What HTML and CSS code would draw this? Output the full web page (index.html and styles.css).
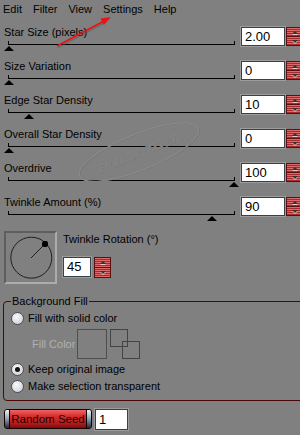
FILE: index.html
```html
<!DOCTYPE html>
<html lang="en">
<head>
    <meta charset="UTF-8">
    <meta name="viewport" content="width=device-width, initial-scale=1.0">
    <title>Star Effects</title>
    <link rel="stylesheet" href="styles.css">
</head>
<body>
    <div class="menubar">
        <span>Edit</span><span>Filter</span><span>View</span><span>Settings</span><span>Help</span>
    </div>

    <div class="row">
        <div class="field">
            <div class="label">Star Size (pixels)</div>
            <div class="track"><span class="thumb" style="left: 0%"></span></div>
        </div>
        <div class="value">
            <div class="box">2.00</div>
            <div class="spin"><span class="up"></span><span class="down"></span></div>
        </div>
    </div>

    <div class="row">
        <div class="field">
            <div class="label">Size Variation</div>
            <div class="track"><span class="thumb" style="left: 0%"></span></div>
        </div>
        <div class="value">
            <div class="box">0</div>
            <div class="spin"><span class="up"></span><span class="down"></span></div>
        </div>
    </div>

    <div class="row">
        <div class="field">
            <div class="label">Edge Star Density</div>
            <div class="track"><span class="thumb" style="left: 9.1%"></span></div>
        </div>
        <div class="value">
            <div class="box">10</div>
            <div class="spin"><span class="up"></span><span class="down"></span></div>
        </div>
    </div>

    <div class="row">
        <div class="field">
            <div class="label">Overall Star Density</div>
            <div class="track"><span class="thumb" style="left: 0%"></span></div>
        </div>
        <div class="value">
            <div class="box">0</div>
            <div class="spin"><span class="up"></span><span class="down"></span></div>
        </div>
    </div>

    <div class="row">
        <div class="field">
            <div class="label">Overdrive</div>
            <div class="track"><span class="thumb" style="left: 100%"></span></div>
        </div>
        <div class="value">
            <div class="box">100</div>
            <div class="spin"><span class="up"></span><span class="down"></span></div>
        </div>
    </div>

    <div class="row">
        <div class="field">
            <div class="label">Twinkle Amount (%)</div>
            <div class="track"><span class="thumb" style="left: 90%"></span></div>
        </div>
        <div class="value">
            <div class="box">90</div>
            <div class="spin"><span class="up"></span><span class="down"></span></div>
        </div>
    </div>

    <!-- rotation dial -->
    <div class="rotation">
        <div class="dial">
            <svg width="49" height="49" viewBox="0 0 49 49">
                <circle cx="25.3" cy="24.7" r="20.5" fill="none" stroke="#1e1e1e" stroke-width="1"/>
                <line x1="25" y1="25" x2="39" y2="11" stroke="#1e1e1e" stroke-width="1"/>
                <rect x="36" y="8" width="6" height="6" rx="2" fill="#000"/>
            </svg>
        </div>
        <div class="rot-side">
            <div class="label">Twinkle Rotation (°)</div>
            <div class="value">
                <div class="box short">45</div>
                <div class="spin tall"><span class="up"></span><span class="down"></span></div>
            </div>
        </div>
    </div>

    <fieldset class="group">
        <legend>Background Fill</legend>
        <div class="opt"><span class="radio"></span>Fill with solid color</div>
        <div class="fill">
            <span class="fill-label">Fill Color</span>
            <span class="swatch"></span>
            <span class="squares"><span class="sq sq-a"></span><span class="sq sq-b"></span></span>
        </div>
        <div class="opt gap"><span class="radio on"></span>Keep original image</div>
        <div class="opt"><span class="radio"></span>Make selection transparent</div>
    </fieldset>

    <div class="seed">
        <div class="seed-btn"><span class="cap"></span><span class="seed-label">Random Seed</span><span class="cap"></span></div>
        <div class="box seed-box">1</div>
    </div>

    <!-- watermark + annotation arrow -->
    <svg class="overlay" width="300" height="435" viewBox="0 0 300 435">
        <g transform="rotate(-22 139 152)" fill="none">
            <ellipse cx="139.6" cy="152.6" rx="64" ry="18" stroke="#747474" stroke-width="1"/>
            <ellipse cx="139" cy="152" rx="64" ry="18" stroke="#8c8c8c" stroke-width="1"/>
            <text x="140.6" y="157.6" text-anchor="middle" font-size="11" font-style="italic" class="wm" fill="#747474" textLength="90">ETOILESAUSECRETS</text>
            <text x="140" y="157" text-anchor="middle" font-size="11" font-style="italic" class="wm" fill="#8c8c8c" textLength="90">ETOILESAUSECRETS</text>
            <text x="140.3" y="157.3" text-anchor="middle" font-size="11" font-style="italic" class="wm" fill="#808080" textLength="90">ETOILESAUSECRETS</text>
        </g>
        <line x1="58" y1="47.5" x2="104" y2="23" stroke="#555" stroke-opacity="0.5" stroke-width="1.5"/>
        <line x1="57" y1="46" x2="103" y2="21.5" stroke="#ee1111" stroke-width="1.5"/>
        <polygon points="111,17 100.4,18.4 103.9,24.9" fill="#ee1111"/>
    </svg>
</body>
</html>
```

FILE: styles.css
```css
body {
    margin: 0;
    width: 300px;
    height: 435px;
    overflow: hidden;
    position: relative;
    background: #808080;
    font-family: "Liberation Sans", Arial, sans-serif;
    font-size: 11px;
    color: #000;
}
.menubar {
    display: flex;
    gap: 11px;
    height: 25px;
    box-sizing: border-box;
    padding: 3px 0 0 3px;
    line-height: 13px;
}
.row {
    display: flex;
    height: 34px;
}
.field {
    width: 241px;
    flex: none;
}
.label {
    margin-top: 1px;
    padding-left: 4px;
    line-height: 13px;
}
.track {
    position: relative;
    margin: 2px 0 0 8px;
    width: 225px;
    height: 3px;
    border: 1px solid #000;
    border-top: 0;
}
.thumb {
    position: absolute;
    top: 5px;
    width: 0;
    height: 0;
    border-left: 5.5px solid transparent;
    border-right: 5.5px solid transparent;
    border-bottom: 5px solid #000;
    transform: translateX(-50%);
}
.value {
    display: flex;
    gap: 1px;
    padding-top: 2px;
}
.box {
    flex: none;
    width: 44px;
    height: 19px;
    box-sizing: border-box;
    border: 1px solid #34424a;
    box-shadow: 0 0 0 1px #9c9c9c;
    background: #fff;
    padding-left: 3px;
    font-size: 13px;
    line-height: 17px;
}
.spin {
    flex: none;
    width: 17px;
    height: 19px;
    box-sizing: border-box;
    display: flex;
    flex-direction: column;
    border: 1px solid #5a1010;
    background: #5a1010;
}
.spin span {
    flex: 1;
    display: flex;
    align-items: center;
    justify-content: center;
    background: repeating-linear-gradient(to bottom, #dc6a6a 0 1px, #a82a2a 1px 2px);
}
.spin .up { margin-bottom: 1px; }
.spin .up::after {
    content: '';
    border-left: 3.5px solid transparent;
    border-right: 3.5px solid transparent;
    border-bottom: 3px solid #333;
    filter: drop-shadow(0 1px 0 #e8c8c8);
}
.spin .down::after {
    content: '';
    border-left: 3.5px solid transparent;
    border-right: 3.5px solid transparent;
    border-top: 3px solid #333;
    filter: drop-shadow(0 1px 0 #e8c8c8);
}
.spin.tall { height: 21px; }

.rotation {
    display: flex;
    gap: 6px;
    padding: 2px 0 0 4px;
}
.dial {
    width: 53px;
    height: 53px;
    box-sizing: border-box;
    border: 2px solid;
    border-color: #5e5e5e #acacac #acacac #5e5e5e;
}
.dial svg { display: block; }
.rot-side .label {
    margin-top: 2px;
    padding-left: 0;
}
.rot-side .value {
    padding-top: 11px;
    gap: 3px;
}
.box.short {
    width: 28px;
    height: 20px;
    line-height: 18px;
}

.group {
    margin: 10px 0 0 3px;
    width: 310px;
    box-sizing: border-box;
    padding: 2px 0 5px 0;
    border: 1px solid #4c0808;
    border-radius: 4px;
}
.group legend {
    margin-left: 7px;
    padding: 0 1px;
    line-height: 14px;
    font-size: 11px;
}
.opt {
    display: flex;
    align-items: center;
    gap: 4px;
    height: 17px;
    padding-left: 7px;
    line-height: 13px;
}
.opt.gap { margin-top: 2px; }
.radio {
    width: 13px;
    height: 13px;
    box-sizing: border-box;
    border-radius: 50%;
    border: 1px solid #4e4e56;
    background: radial-gradient(circle at 40% 35%, #fafafc, #d6d6de 70%, #b8b8c2);
    display: flex;
    align-items: center;
    justify-content: center;
}
.radio.on::after {
    content: '';
    width: 5px;
    height: 5px;
    border-radius: 50%;
    background: #111;
}
.fill {
    display: flex;
    align-items: center;
    height: 30px;
    margin-top: 2px;
    padding-left: 28px;
}
.fill-label {
    width: 45px;
    color: #b0b0b0;
    line-height: 13px;
}
.swatch {
    width: 30px;
    height: 30px;
    box-sizing: border-box;
    border: 1px solid #4e4e4e;
}
.squares {
    display: grid;
    grid-template-columns: 12px 6px 12px;
    grid-template-rows: 12px 6px 12px;
    margin-left: 3px;
}
.sq {
    border: 1px solid #444;
    box-sizing: border-box;
}
.sq-a { grid-column: 1 / 3; grid-row: 1 / 3; }
.sq-b { grid-column: 2 / 4; grid-row: 2 / 4; }

.seed {
    display: flex;
    gap: 3px;
    margin: 8px 0 0 4px;
}
.seed-btn {
    display: flex;
    flex: none;
    width: 88px;
    height: 20px;
    box-sizing: border-box;
    border: 1px solid #120000;
    border-radius: 3px;
    overflow: hidden;
    background: linear-gradient(#ee6464, #d42e2e 35%, #bc1c1c 70%, #7e0c0c);
}
.cap {
    flex: none;
    width: 4px;
    background: linear-gradient(#f0f4fa, #9aa8bc 45%, #4a5668 80%, #222a36);
}
.cap:first-child { border-right: 1px solid #000; }
.cap:last-child { border-left: 1px solid #000; }
.seed-label {
    flex: 1;
    text-align: center;
    white-space: nowrap;
    line-height: 18px;
    font-size: 11.5px;
    color: #1a0000;
}
.box.seed-box {
    width: 33px;
    height: 21px;
    line-height: 19px;
}

.overlay {
    position: absolute;
    left: 0;
    top: 0;
    pointer-events: none;
}
.wm {
    font-family: "Liberation Sans", Arial, sans-serif;
    font-weight: bold;
}
```
